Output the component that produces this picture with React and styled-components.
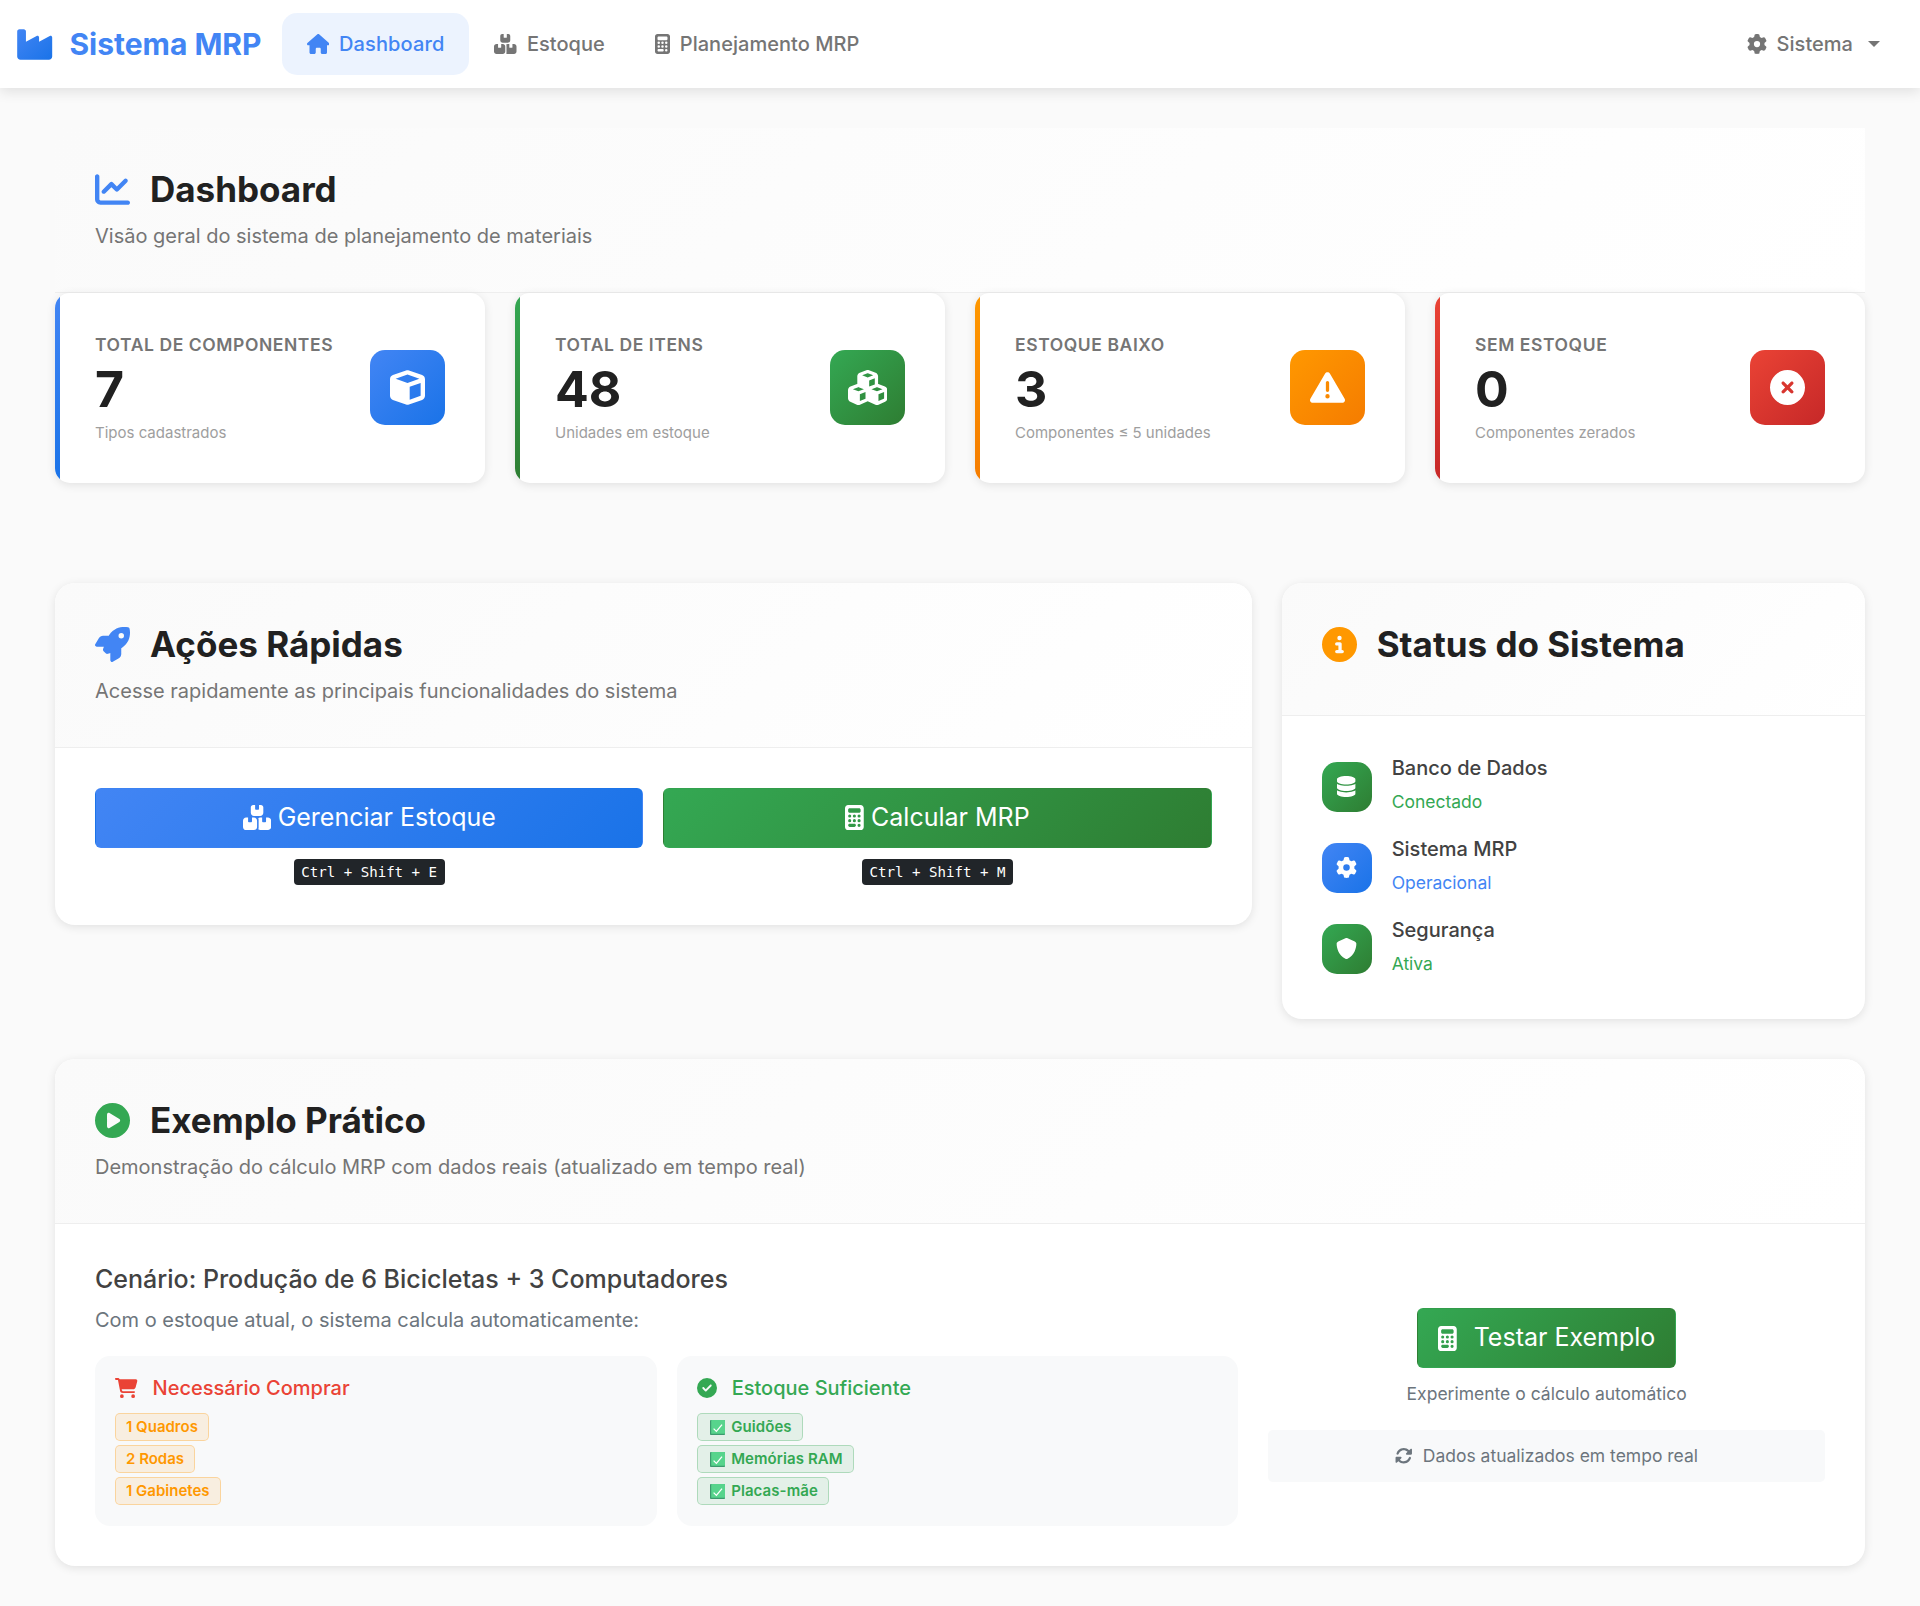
import React from 'react';
import styled, { createGlobalStyle } from 'styled-components';
import {
  FaIndustry, FaHouse, FaBoxesStacked, FaCalculator, FaGear, FaChartLine, FaCube, FaCubes,
  FaTriangleExclamation, FaCircleXmark, FaRocket, FaCircleInfo, FaDatabase, FaShield,
  FaCirclePlay, FaCartShopping, FaCircleCheck, FaRotate,
} from 'react-icons/fa6';

const gradients = {
  blue: '#4285f4, #1a73e8',
  green: '#34a853, #2e7d32',
  orange: '#ff9800, #f57c00',
  red: '#ea4335, #c62828',
};
const solid = { blue: '#4285f4', green: '#34a853', orange: '#ff9800', red: '#ea4335' };

const GlobalStyle = createGlobalStyle`
  *, *::before, *::after { box-sizing: border-box; }
  html { font-size: 20px; }
  body {
    margin: 0;
    background: #fafafa;
    color: #212121;
    font-family: Inter, 'Liberation Sans', sans-serif;
    font-size: 20px;
    line-height: 1.6;
  }
  h1, h2, h3, h4, p { margin: 0; }
`;

const Glyph = styled.span`
  display: inline-flex;
  flex: none;
  font-size: ${p => p.$size}px;
  color: ${p => p.$color || 'inherit'};
  svg { display: block; height: 1em; width: ${p => p.$ratio || 1}em; }
`;

const Navbar = styled.header`
  display: flex;
  align-items: center;
  height: 88px;
  padding: 0 15px;
  background: #fff;
  position: relative;
  box-shadow: 0 4px 12px rgba(0, 0, 0, 0.1);
`;

const Brand = styled.a`
  display: flex;
  align-items: center;
  gap: 15px;
  margin-right: 20px;
  font-size: 30px;
  font-weight: 700;
  line-height: 1;
  color: #4285f4;
  svg path { fill: url(#brandFill); }
`;

const GradientDefs = styled.svg`
  position: absolute;
  width: 0;
  height: 0;
`;

const NavLinks = styled.nav`
  display: flex;
  flex: 1;
`;

const NavLink = styled.a`
  display: flex;
  align-items: center;
  gap: 10px;
  height: 62px;
  padding: 0 25px;
  border-radius: 15px;
  font-weight: 500;
  letter-spacing: ${p => (p.$active ? 0.12 : 0.03)}px;
  color: ${p => (p.$active ? '#4285f4' : '#757575')};
  background: ${p => (p.$active ? 'rgba(66, 133, 244, 0.1)' : 'transparent')};
`;

const Caret = styled.span`
  margin-left: 5px;
  border-top: 6px solid;
  border-left: 6px solid transparent;
  border-right: 6px solid transparent;
`;

const Page = styled.main`
  padding: 40px 55px;
`;

const SectionHeader = styled.div`
  padding: 40px;
  border-bottom: 1px solid #eeeeee;
  background: linear-gradient(135deg, #fafafa, #ffffff);
`;

const SectionTitle = styled.h2`
  display: flex;
  align-items: center;
  gap: 20px;
  margin-bottom: 10px;
  font-size: 35px;
  line-height: 42px;
  font-weight: 700;
`;

const Subtitle = styled.p`
  color: #757575;
`;

const StatGrid = styled.section`
  display: grid;
  grid-template-columns: repeat(4, 1fr);
  gap: 30px;
  margin-bottom: 100px;
`;

const shadow = '0 2px 10px rgba(0, 0, 0, 0.1)';

const StatCard = styled.article`
  display: flex;
  align-items: center;
  height: 190px;
  padding-right: 40px;
  border-radius: 15px;
  overflow: hidden;
  background: #fff;
  box-shadow: ${shadow};
`;

const StatAccent = styled.div`
  align-self: stretch;
  width: 5px;
  margin-right: 35px;
  background: linear-gradient(180deg, ${p => gradients[p.$tone]});
`;

const StatContent = styled.div`
  display: flex;
  flex: 1;
  align-items: center;
  padding-bottom: 1px;
`;

const StatText = styled.div`
  flex: 1;
`;

const StatLabel = styled.div`
  font-size: 17.5px;
  line-height: 28px;
  font-weight: 600;
  letter-spacing: 0.58px;
  text-transform: uppercase;
  color: #757575;
`;

const StatValue = styled.div`
  margin-bottom: 2px;
  font-size: 50px;
  line-height: 60px;
  font-weight: 700;
`;

const StatNote = styled.div`
  font-size: 15px;
  line-height: 24px;
  color: #9e9e9e;
`;

const IconTile = styled.div`
  display: flex;
  flex: none;
  align-items: center;
  justify-content: center;
  width: ${p => p.$size}px;
  height: ${p => p.$size}px;
  border-radius: 15px;
  color: #fff;
  background: linear-gradient(135deg, ${p => gradients[p.$tone]});
`;

const MiddleRow = styled.div`
  display: grid;
  grid-template-columns: 1196.67px 1fr;
  align-items: start;
  gap: 30px;
  margin-bottom: 40px;
`;

const Card = styled.section`
  border-radius: 20px;
  overflow: hidden;
  background: #fff;
  box-shadow: ${shadow};
`;

const CardBody = styled.div`
  padding: 40px;
`;

const ActionGrid = styled(CardBody)`
  display: grid;
  grid-template-columns: 1fr 1fr;
  gap: 20px;
`;

const Action = styled.div`
  display: flex;
  flex-direction: column;
  align-items: center;
  gap: 11.5px;
`;

const Button = styled.a`
  display: flex;
  align-items: center;
  justify-content: center;
  gap: ${p => p.$gap || 7}px;
  align-self: ${p => (p.$block ? 'stretch' : 'center')};
  padding: 10px 20px;
  border: 1px solid transparent;
  border-radius: 6px;
  font-size: 25px;
  line-height: 37.5px;
  color: #fff;
  background: linear-gradient(135deg, ${p => gradients[p.$tone]});
`;

const Shortcut = styled.kbd`
  padding: 4px 7.5px;
  border-radius: 4px;
  font-family: 'DejaVu Sans Mono', monospace;
  font-size: 14.1px;
  line-height: 18px;
  color: #fff;
  background: #212529;
`;

const StatusList = styled(CardBody)`
  display: flex;
  flex-direction: column;
  gap: 20px;
`;

const StatusRow = styled.div`
  display: flex;
  align-items: center;
  gap: 20px;
`;

const StatusName = styled.h4`
  margin-bottom: 7px;
  font-size: 20px;
  line-height: 24px;
  font-weight: 500;
  color: #424242;
`;

const StatusValue = styled.p`
  font-size: 17.5px;
  line-height: 30px;
  color: ${p => solid[p.$tone]};
`;

const ExampleBody = styled(CardBody)`
  display: grid;
  grid-template-columns: 1143.33px 1fr;
  align-items: center;
  gap: 30px;
`;

const ScenarioTitle = styled.h3`
  margin-bottom: 10px;
  font-size: 25px;
  line-height: 30px;
  font-weight: 500;
  color: #424242;
`;

const Muted = styled.p`
  font-size: ${p => (p.$small ? 17.5 : 20)}px;
  line-height: 32px;
  color: #6c757d;
`;

const ResultGrid = styled.div`
  display: grid;
  grid-template-columns: 1fr 1fr;
  gap: 20px;
  margin-top: 20px;
`;

const ResultBox = styled.div`
  padding: 20px;
  border-radius: 15px;
  background: #f8f9fa;
`;

const ResultTitle = styled.h4`
  display: flex;
  align-items: center;
  gap: 15px;
  margin-bottom: 13px;
  font-size: 20px;
  line-height: 24px;
  font-weight: 500;
  color: ${p => solid[p.$tone]};
`;

const BadgeList = styled.div`
  display: flex;
  flex-direction: column;
  align-items: flex-start;
  gap: 4px;
  margin-bottom: 1px;
`;

const Badge = styled.span`
  display: flex;
  align-items: center;
  height: 28px;
  padding: 0 10px;
  border: 1px solid ${p => (p.$tone === 'orange' ? 'rgba(255,152,0,.3)' : 'rgba(52,168,83,.3)')};
  border-radius: 5px;
  font-size: 15px;
  font-weight: 600;
  letter-spacing: ${p => (p.$tone === 'green' ? 0.08 : 0)}px;
  color: ${p => solid[p.$tone]};
  background: ${p => (p.$tone === 'orange' ? 'rgba(255,152,0,.1)' : 'rgba(52,168,83,.1)')};
`;

const CheckMark = styled.svg`
  width: 15px;
  height: 15px;
  margin: 0 6.5px 0 2px;
`;

const TryColumn = styled.div`
  display: flex;
  flex-direction: column;
  align-items: stretch;
  text-align: center;
`;

const TryCaption = styled(Muted)`
  margin: 10px 0 20px;
`;

const Notice = styled.div`
  display: flex;
  align-items: center;
  justify-content: center;
  gap: 10px;
  height: 52px;
  border-radius: 5px;
  font-size: 17.5px;
  color: #6c757d;
  background: #f8f9fa;
`;

const Icon = ({ as: Shape, ...rest }) => <Glyph {...rest}><Shape /></Glyph>;

const CheckBox = () => (
  <CheckMark viewBox="0 0 15 15">
    <rect width="15" height="15" rx="0.8" fill="#3c9a6e" />
    <rect x="1.2" width="13.8" height="13.8" rx="0.6" fill="#57d48c" />
    <path d="M3.6 8.6 6.4 11.4 12 4.6" fill="none" stroke="#fff" strokeWidth="1.3" />
  </CheckMark>
);

const Header = ({ icon, tone, title, subtitle }) => (
  <SectionHeader>
    <SectionTitle><Icon as={icon} $size={35} $color={solid[tone]} />{title}</SectionTitle>
    {subtitle && <Subtitle>{subtitle}</Subtitle>}
  </SectionHeader>
);

const stats = [
  { label: 'Total de Componentes', value: 7, note: 'Tipos cadastrados', tone: 'blue', icon: FaCube },
  { label: 'Total de Itens', value: 48, note: 'Unidades em estoque', tone: 'green', icon: FaCubes, ratio: 1.125 },
  { label: 'Estoque Baixo', value: 3, note: 'Componentes ≤ 5 unidades', tone: 'orange', icon: FaTriangleExclamation },
  { label: 'Sem Estoque', value: 0, note: 'Componentes zerados', tone: 'red', icon: FaCircleXmark },
];

const statuses = [
  { name: 'Banco de Dados', value: 'Conectado', tone: 'green', icon: FaDatabase, ratio: 0.875 },
  { name: 'Sistema MRP', value: 'Operacional', tone: 'blue', icon: FaGear },
  { name: 'Segurança', value: 'Ativa', tone: 'green', icon: FaShield },
];

export default function App() {
  return (
    <>
      <GlobalStyle />
      <Navbar>
        <GradientDefs>
          <linearGradient id="brandFill" x1="0" y1="0" x2="1" y2="1">
            <stop offset="0" stopColor="#4285f4" />
            <stop offset="1" stopColor="#1a73e8" />
          </linearGradient>
        </GradientDefs>
        <Brand><Icon as={FaIndustry} $size={35} $ratio={1.125} />Sistema MRP</Brand>
        <NavLinks>
          <NavLink $active><Icon as={FaHouse} $size={20} $ratio={1.125} />Dashboard</NavLink>
          <NavLink><Icon as={FaBoxesStacked} $size={20} $ratio={1.125} />Estoque</NavLink>
          <NavLink><Icon as={FaCalculator} $size={20} $ratio={0.75} />Planejamento MRP</NavLink>
        </NavLinks>
        <NavLink><Icon as={FaGear} $size={20} />Sistema<Caret /></NavLink>
      </Navbar>
      <Page>
        <Header icon={FaChartLine} tone="blue" title="Dashboard" subtitle="Visão geral do sistema de planejamento de materiais" />
        <StatGrid>
          {stats.map(s => (
            <StatCard key={s.label}>
              <StatAccent $tone={s.tone} />
              <StatContent>
                <StatText>
                  <StatLabel>{s.label}</StatLabel>
                  <StatValue>{s.value}</StatValue>
                  <StatNote>{s.note}</StatNote>
                </StatText>
                <IconTile $size={75} $tone={s.tone}><Icon as={s.icon} $size={35} $ratio={s.ratio} /></IconTile>
              </StatContent>
            </StatCard>
          ))}
        </StatGrid>
        <MiddleRow>
          <Card>
            <Header icon={FaRocket} tone="blue" title="Ações Rápidas" subtitle="Acesse rapidamente as principais funcionalidades do sistema" />
            <ActionGrid>
              <Action>
                <Button $tone="blue" $block><Icon as={FaBoxesStacked} $size={25} $ratio={1.125} />Gerenciar Estoque</Button>
                <Shortcut>Ctrl + Shift + E</Shortcut>
              </Action>
              <Action>
                <Button $tone="green" $block><Icon as={FaCalculator} $size={25} $ratio={0.75} />Calcular MRP</Button>
                <Shortcut>Ctrl + Shift + M</Shortcut>
              </Action>
            </ActionGrid>
          </Card>
          <Card>
            <Header icon={FaCircleInfo} tone="orange" title="Status do Sistema" />
            <StatusList>
              {statuses.map(s => (
                <StatusRow key={s.name}>
                  <IconTile $size={50} $tone={s.tone}><Icon as={s.icon} $size={21} $ratio={s.ratio} /></IconTile>
                  <div>
                    <StatusName>{s.name}</StatusName>
                    <StatusValue $tone={s.tone}>{s.value}</StatusValue>
                  </div>
                </StatusRow>
              ))}
            </StatusList>
          </Card>
        </MiddleRow>
        <Card>
          <Header icon={FaCirclePlay} tone="green" title="Exemplo Prático" subtitle="Demonstração do cálculo MRP com dados reais (atualizado em tempo real)" />
          <ExampleBody>
            <div>
              <ScenarioTitle>Cenário: Produção de 6 Bicicletas + 3 Computadores</ScenarioTitle>
              <Muted>Com o estoque atual, o sistema calcula automaticamente:</Muted>
              <ResultGrid>
                <ResultBox>
                  <ResultTitle $tone="red"><Icon as={FaCartShopping} $size={20} $ratio={1.125} />Necessário Comprar</ResultTitle>
                  <BadgeList>
                    {['1 Quadros', '2 Rodas', '1 Gabinetes'].map(t => <Badge key={t} $tone="orange">{t}</Badge>)}
                  </BadgeList>
                </ResultBox>
                <ResultBox>
                  <ResultTitle $tone="green"><Icon as={FaCircleCheck} $size={20} />Estoque Suficiente</ResultTitle>
                  <BadgeList>
                    {['Guidões', 'Memórias RAM', 'Placas-mãe'].map(t => <Badge key={t} $tone="green"><CheckBox />{t}</Badge>)}
                  </BadgeList>
                </ResultBox>
              </ResultGrid>
            </div>
            <TryColumn>
              <Button $tone="green" $gap={17}><Icon as={FaCalculator} $size={25} $ratio={0.75} />Testar Exemplo</Button>
              <TryCaption $small>Experimente o cálculo automático</TryCaption>
              <Notice><Icon as={FaRotate} $size={17.5} />Dados atualizados em tempo real</Notice>
            </TryColumn>
          </ExampleBody>
        </Card>
      </Page>
    </>
  );
}
